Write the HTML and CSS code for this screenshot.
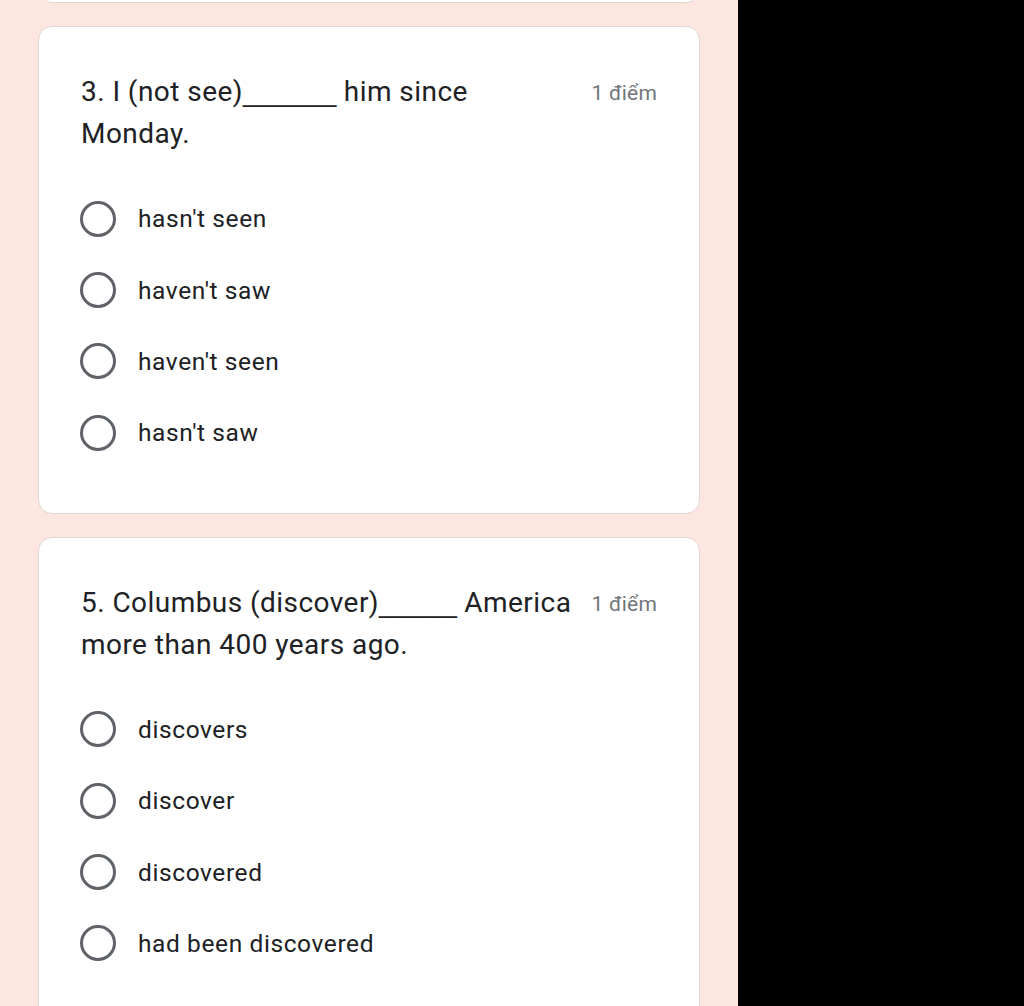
FILE: index.html
```html
<!DOCTYPE html>
<html lang="vi">
<head>
<meta charset="utf-8">
<title>Quiz</title>
<link rel="stylesheet" href="styles.css">
</head>
<body>
<div class="screen">
  <main class="form">
    <section class="card stub"></section>

    <section class="card">
      <div class="q-head">
        <div class="q-title">3. I (not see)<span class="blank">______</span> him since<br>Monday.</div>
        <div class="q-points">1 điểm</div>
      </div>
      <div class="options">
        <label class="option"><span class="radio"></span><span class="opt-text">hasn't seen</span></label>
        <label class="option"><span class="radio"></span><span class="opt-text">haven't saw</span></label>
        <label class="option"><span class="radio"></span><span class="opt-text">haven't seen</span></label>
        <label class="option"><span class="radio"></span><span class="opt-text">hasn't saw</span></label>
      </div>
    </section>

    <section class="card">
      <div class="q-head">
        <div class="q-title">5. Columbus (discover)<span class="blank">_____</span> America<br>more than 400 years ago.</div>
        <div class="q-points">1 điểm</div>
      </div>
      <div class="options">
        <label class="option"><span class="radio"></span><span class="opt-text">discovers</span></label>
        <label class="option"><span class="radio"></span><span class="opt-text">discover</span></label>
        <label class="option"><span class="radio"></span><span class="opt-text">discovered</span></label>
        <label class="option"><span class="radio"></span><span class="opt-text">had been discovered</span></label>
      </div>
    </section>
  </main>
  <aside class="blackout"></aside>
</div>
</body>
</html>
```

FILE: styles.css
```css
html, body {
  margin: 0;
  padding: 0;
  height: 100%;
  overflow: hidden;
}
body {
  font-family: Roboto, "Liberation Sans", Arial, sans-serif;
  color: #202124;
}
.screen {
  display: flex;
  height: 1006px;
}
.form {
  width: 738px;
  flex: none;
  background: #fde6df;
  padding: 0 38px;
  box-sizing: border-box;
  display: flex;
  flex-direction: column;
  gap: 23px;
}
.blackout {
  flex: 1;
  background: #000;
}
.card {
  background: #fff;
  border: 1px solid #e0d6d3;
  border-radius: 14px;
  padding: 44px 42px 44px 42px;
  flex: none;
}
.card.stub {
  height: 30px;
  padding: 0;
  margin-top: -27px;
  box-sizing: border-box;
}
.q-head {
  display: flex;
  align-items: flex-start;
  justify-content: space-between;
  gap: 12px;
}
.q-title {
  font-size: 28px;
  line-height: 42px;
  letter-spacing: 0.45px;
  color: #202124;
}
.blank {
  font-family: "Liberation Sans", Arial, sans-serif;
  letter-spacing: 0;
}
.q-points {
  font-size: 21px;
  line-height: 42px;
  padding-top: 1px;
  color: #70757a;
  white-space: nowrap;
  letter-spacing: 0.2px;
}
.options {
  margin-top: 28px;
  display: flex;
  flex-direction: column;
}
.option {
  display: flex;
  align-items: center;
  height: 71.4px;
}
.radio {
  width: 36px;
  height: 36px;
  box-sizing: border-box;
  border: 3.5px solid #5f6368;
  border-radius: 50%;
  flex: none;
  margin-left: -1px;
  margin-right: 22px;
}
.opt-text {
  font-size: 24.5px;
  letter-spacing: 0.6px;
  color: #202124;
}
```
